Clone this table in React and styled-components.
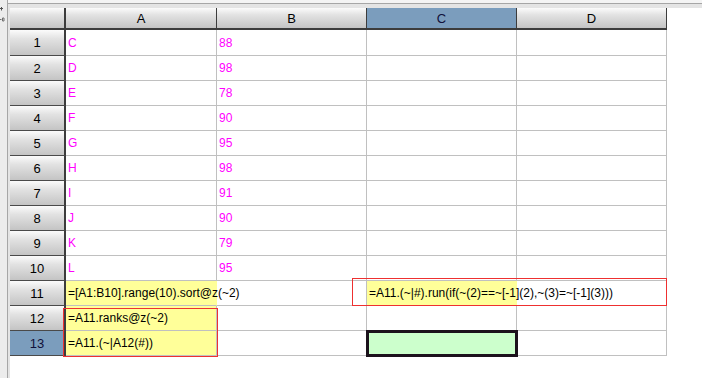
import styled, { createGlobalStyle } from "styled-components";

const GlobalStyle = createGlobalStyle`
  html, body {
    margin: 0;
    padding: 0;
    background: #ffffff;
  }
  body {
    font-family: "Liberation Sans", Arial, sans-serif;
  }
`;

const Frame = styled.div`
  display: flex;
  width: 702px;
  height: 378px;
  overflow: hidden;
  background: #ffffff;
`;

const LeftRail = styled.div`
  flex: none;
  width: 7px;
  background: #ececec;
  border-right: 1px solid #a6a6a6;
  svg {
    display: block;
  }
`;

const Pane = styled.div`
  flex: 1;
  display: flex;
  flex-direction: column;
`;

const TopBand = styled.div`
  flex: none;
  height: 3px;
  background: #f4f4f4;
  border-bottom: 1px solid #a6a6a6;
`;

const Inner = styled.div`
  flex: 1;
  position: relative;
  background: #ffffff;
  border-top: 4px solid #e4e4e4;
  border-left: 2px solid #e4e4e4;
`;

const Sheet = styled.div`
  display: grid;
  grid-template-columns: 56px 151px repeat(3, 150px);
  grid-template-rows: 22px 26px repeat(12, 25px);
  width: max-content;
`;

const HeadCell = styled.div`
  box-sizing: border-box;
  display: flex;
  align-items: center;
  justify-content: center;
  font-size: 13px;
  color: ${(p) => (p.$active ? "#10103a" : "#000000")};
  background: ${(p) =>
    p.$active
      ? "#7b9dbd"
      : "linear-gradient(to bottom, #fbfbfb 0%, #e2e2e2 35%, #c4c4c4 100%)"};
  border-right: ${(p) => (p.$side ? "2px" : "1px")} solid #3c3c3c;
  border-bottom: ${(p) => (p.$top ? "2px solid #3c3c3c" : "1px solid #4a4a4a")};
`;

const Cell = styled.div`
  box-sizing: border-box;
  position: ${(p) => (p.$cursor ? "relative" : "static")};
  display: flex;
  align-items: center;
  padding-left: 2px;
  font-size: 12px;
  white-space: nowrap;
  color: ${(p) => p.$color || "#000000"};
  background: ${(p) => p.$bg || "transparent"};
  border-right: 1px solid ${(p) => (p.$spill ? "transparent" : "#c0c0c0")};
  border-bottom: 1px solid #c0c0c0;

  ${(p) =>
    p.$cursor &&
    `
    &::after {
      content: "";
      position: absolute;
      top: -1px;
      left: -1px;
      right: -2px;
      bottom: -2px;
      border: 3px solid #1c121c;
    }
  `}
`;

const Mark = styled.div`
  position: absolute;
  left: ${(p) => p.$x}px;
  top: ${(p) => p.$y}px;
  width: ${(p) => p.$w}px;
  height: ${(p) => p.$h}px;
  border: 1px solid #ee3030;
  box-sizing: border-box;
  pointer-events: none;
`;

const cols = ["A", "B", "C", "D"];
const letters = ["C", "D", "E", "F", "G", "H", "I", "J", "K", "L"];
const scores = ["88", "98", "78", "90", "95", "98", "91", "90", "79", "95"];

const YELLOW = "#ffff99";
const MAGENTA = "#ff00ff";

const special = {
  "11A": { text: "=[A1:B10].range(10).sort@z(~2)", bg: YELLOW, spill: true },
  "11C": {
    text: "=A11.(~|#).run(if(~(2)==~[-1](2),~(3)=~[-1](3)))",
    bg: YELLOW,
    spill: true,
  },
  "12A": { text: "=A11.ranks@z(~2)", bg: YELLOW },
  "13A": { text: "=A11.(~|A12(#))", bg: YELLOW },
  "13C": { bg: "#ccffcc", cursor: true },
};

function cellProps(row, col) {
  if (row <= 10) {
    if (col === "A") return { text: letters[row - 1], color: MAGENTA };
    if (col === "B") return { text: scores[row - 1], color: MAGENTA };
    return {};
  }
  return special[row + col] || {};
}

export default function App() {
  const rows = Array.from({ length: 13 }, (_, i) => i + 1);

  return (
    <>
      <GlobalStyle />
      <Frame>
        <LeftRail>
          <svg width="7" height="24" viewBox="0 0 7 24">
            <path d="M0 8.5h3M1.5 7v3.5" stroke="#505050" strokeWidth="1" fill="none" />
            <path d="M0 19.5h1.5M2.5 18h1.5v3h-1.5z" stroke="#707070" strokeWidth="1" fill="none" />
          </svg>
        </LeftRail>
        <Pane>
          <TopBand />
          <Inner>
            <Sheet>
              <HeadCell $top $side />
              {cols.map((c) => (
                <HeadCell key={c} $top $active={c === "C"}>
                  {c}
                </HeadCell>
              ))}
              {rows.map((r) => [
                <HeadCell key={`h${r}`} $side $active={r === 13}>
                  {r}
                </HeadCell>,
                ...cols.map((c) => {
                  const p = cellProps(r, c);
                  return (
                    <Cell
                      key={`${r}${c}`}
                      $bg={p.bg}
                      $color={p.color}
                      $spill={p.spill}
                      $cursor={p.cursor}
                    >
                      {p.text}
                    </Cell>
                  );
                }),
              ])}
            </Sheet>
            <Mark $x={342} $y={270} $w={315} $h={28} />
            <Mark $x={53} $y={300} $w={155} $h={49} />
          </Inner>
        </Pane>
      </Frame>
    </>
  );
}
